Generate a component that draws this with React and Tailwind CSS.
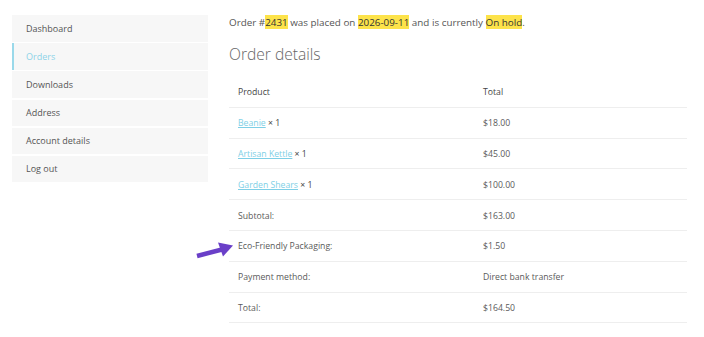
const nav = [
  { label: "Dashboard" },
  { label: "Orders", active: true },
  { label: "Downloads" },
  { label: "Address" },
  { label: "Account details" },
  { label: "Log out" },
];

const items = [
  { name: "Beanie", price: "$18.00" },
  { name: "Artisan Kettle", price: "$45.00" },
  { name: "Garden Shears", price: "$100.00" },
];

const totals = [
  { label: "Subtotal:", value: "$163.00" },
  { label: "Eco-Friendly Packaging:", value: "$1.50", arrow: true },
  { label: "Payment method:", value: "Direct bank transfer" },
  { label: "Total:", value: "$164.50" },
];

function Arrow() {
  return (
    <svg
      className="absolute left-[-34px] top-[9px]"
      width="40"
      height="20"
      viewBox="0 0 40 20"
    >
      <path d="M2 16 L27 9.5" stroke="#6a3fc8" strokeWidth="4.5" />
      <path d="M23 2.5 L38 5.5 L28 16.5 Z" fill="#6a3fc8" />
    </svg>
  );
}

export default function App() {
  return (
    <div
      className="w-[704px] h-[337px] bg-white flex gap-[21px] pl-[12px] pt-[15px] text-[#555]"
      style={{ fontFamily: '"Open Sans", "Liberation Sans", sans-serif' }}
    >
      {/* Sidebar */}
      <nav className="w-[196px] flex flex-col gap-[1.7px]">
        {nav.map((n) => (
          <div
            key={n.label}
            className={
              n.active
                ? "h-[26.5px] bg-[#f7f7f7] border-l-2 border-[#9ad9ea] pl-[12px] flex items-center text-[9px] text-[#8dd3e8]"
                : "h-[26.5px] bg-[#f7f7f7] pl-[14px] flex items-center text-[9px] text-[#555]"
            }
          >
            {n.label}
          </div>
        ))}
      </nav>

      {/* Main */}
      <main className="w-[458px]">
        <p className="text-[9.85px] leading-[14px] text-[#555]">
          Order #<mark className="bg-[#fde34a] text-[#333]">2431</mark> was placed on{" "}
          <mark className="bg-[#fde34a] text-[#333]">2026-09-11</mark> and is currently{" "}
          <mark className="bg-[#fde34a] text-[#333]">On hold</mark>.
        </p>
        <h2 className="text-[15.6px] font-light text-[#666] mt-[15px] leading-[20px]">
          Order details
        </h2>

        <div className="mt-[13px] text-[8.7px] text-[#5a5a5a]">
          <div className="flex h-[30.8px] items-center pt-[2px] border-b border-[#eee]">
            <div className="w-[254px] pl-[9px] text-[#444]">Product</div>
            <div className="text-[#444]">Total</div>
          </div>
          {items.map((it) => (
            <div key={it.name} className="flex h-[30.8px] items-center pt-[2px] border-b border-[#eee]">
              <div className="w-[254px] pl-[9px]">
                <span className="text-[#7ecfe6] underline">{it.name}</span>
                <span className="text-[#444]"> × 1</span>
              </div>
              <div>{it.price}</div>
            </div>
          ))}
          {totals.map((t) => (
            <div key={t.label} className="relative flex h-[30.8px] items-center pt-[2px] border-b border-[#eee]">
              {t.arrow && <Arrow />}
              <div className="w-[254px] pl-[9px]">{t.label}</div>
              <div>{t.value}</div>
            </div>
          ))}
        </div>
      </main>
    </div>
  );
}
